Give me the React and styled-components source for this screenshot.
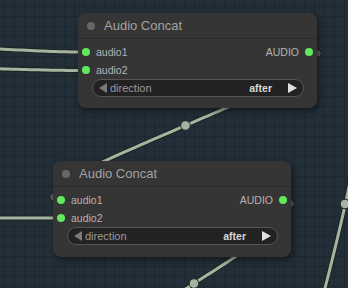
import React from "react"
import styled, { createGlobalStyle } from "styled-components"

const GlobalStyle = createGlobalStyle`
  html, body {
    margin: 0;
    padding: 0;
    background: #222e38;
  }
`

const Canvas = styled.div`
  position: relative;
  width: 348px;
  height: 288px;
  overflow: hidden;
  font-family: "Liberation Sans", Arial, sans-serif;
  background-color: #222e38;
  background-image:
    linear-gradient(to right, rgba(0, 0, 0, 0.13) 1px, transparent 1px),
    linear-gradient(to bottom, rgba(0, 0, 0, 0.13) 1px, transparent 1px);
  background-size: 10px 10px;
  background-position: 4px 6px;
`

const LinkLayer = styled.svg`
  position: absolute;
  left: 0;
  top: 0;
`

const NodeBox = styled.div`
  position: absolute;
  left: ${p => p.$x}px;
  top: ${p => p.$y}px;
  width: ${p => p.$w}px;
  height: ${p => p.$h}px;
  box-sizing: border-box;
  display: flex;
  flex-direction: column;
  background: #353535;
  border-radius: 8px;
  box-shadow: 2px 3px 6px rgba(0, 0, 0, 0.45);
`

const TitleBar = styled.div`
  height: 25px;
  display: flex;
  align-items: center;
  gap: 9px;
  padding-left: 9px;
  border-bottom: 1px solid #2a2a2a;
`

const TitleDot = styled.span`
  width: 8px;
  height: 8px;
  border-radius: 50%;
  background: #676767;
`

const TitleText = styled.span`
  font-size: 13px;
  color: #a3a3a3;
`

const Body = styled.div`
  display: flex;
  flex-direction: column;
  padding: 4px 0 0;
`

const SlotRow = styled.div`
  height: 18px;
  display: flex;
  align-items: center;
  justify-content: space-between;
`

const Slot = styled.div`
  display: flex;
  align-items: center;
  gap: 6px;
  flex-direction: ${p => (p.$out ? "row-reverse" : "row")};
  padding: ${p => (p.$out ? "0 4px 0 0" : "0 0 0 4px")};
`

const SlotDot = styled.span`
  width: 8px;
  height: 8px;
  border-radius: 50%;
  background: #61e85c;
`

const SlotLabel = styled.span`
  font-size: 10.5px;
  color: #b4b4b4;
`

const Combo = styled.div`
  margin: 0 13px 0 14px;
  height: 18px;
  box-sizing: border-box;
  display: flex;
  align-items: center;
  padding: 0 6px 0 6px;
  border-radius: 9px;
  background: #222222;
  border: 1px solid #555555;
`

const Arrow = styled.span`
  width: 0;
  height: 0;
  border-top: 5px solid transparent;
  border-bottom: 5px solid transparent;
  ${p => (p.$right ? "border-left: 9px solid #e0e0e0;" : "border-right: 8px solid #7a7a7a;")}
`

const ComboLabel = styled.span`
  flex: 1;
  margin-left: 3px;
  font-size: 11px;
  color: #9a9a9a;
`

const ComboValue = styled.span`
  font-size: 10.5px;
  font-weight: 700;
  color: #d8d8d8;
  margin-right: 16px;
`

const WIRE = "#a3b5a0"

function bez(p, t) {
  const u = 1 - t
  const a = u * u * u, b = 3 * u * u * t, c = 3 * u * t * t, d = t * t * t
  return [
    a * p[0][0] + b * p[1][0] + c * p[2][0] + d * p[3][0],
    a * p[0][1] + b * p[1][1] + c * p[2][1] + d * p[3][1],
  ]
}

function segment(p, t0, t1) {
  const pts = []
  for (let i = 0; i <= 40; i++) {
    const [x, y] = bez(p, t0 + ((t1 - t0) * i) / 40)
    pts.push(`${x.toFixed(2)} ${y.toFixed(2)}`)
  }
  return "M " + pts.join(" L ")
}

const links = [
  { p: [[-80, 46], [-40, 46], [38, 52], [80, 52]], t: [0, 1] },
  { p: [[-80, 67], [-40, 67], [38, 70.5], [80, 70.5]], t: [0, 1] },
  { p: [[-10, 218], [10, 218], [40, 218], [56, 218]], t: [0, 1] },
  { p: [[318, 52], [394, 52], [-23, 199], [53, 199]], t: [0.28, 0.72], dot: true },
  { p: [[291, 201], [355, 201], [33, 366], [97, 366]], t: [0.3, 0.7], dot: true },
  { p: [[356, 150], [350, 185], [342, 222], [322, 300]], t: [0, 1], dot: [345, 204] },
]

function Links() {
  return (
    <LinkLayer width="348" height="288">
      {links.map((l, i) => (
        <g key={i}>
          <path d={segment(l.p, l.t[0], l.t[1])} stroke="#1c2420" strokeWidth="5" fill="none" />
          <path d={segment(l.p, l.t[0], l.t[1])} stroke={WIRE} strokeWidth="3" fill="none" />
        </g>
      ))}
      {links.filter(l => l.dot).map((l, i) => {
        const [x, y] = Array.isArray(l.dot) ? l.dot : bez(l.p, 0.5)
        return <circle key={i} cx={x} cy={y} r="4.8" fill={WIRE} stroke="#1c2420" strokeWidth="1" />
      })}
      <circle cx="317.5" cy="53.5" r="3.8" fill="#5c5c5c" stroke="#1f1f1f" strokeWidth="1" />
      <circle cx="290.5" cy="203.5" r="3.8" fill="#5c5c5c" stroke="#1f1f1f" strokeWidth="1" />
      <circle cx="53.5" cy="197" r="3.8" fill="#5c5c5c" stroke="#1f1f1f" strokeWidth="1" />
    </LinkLayer>
  )
}

function AudioConcat({ x, y, w, h }) {
  return (
    <NodeBox $x={x} $y={y} $w={w} $h={h}>
      <TitleBar>
        <TitleDot />
        <TitleText>Audio Concat</TitleText>
      </TitleBar>
      <Body>
        <SlotRow>
          <Slot>
            <SlotDot />
            <SlotLabel>audio1</SlotLabel>
          </Slot>
          <Slot $out>
            <SlotDot />
            <SlotLabel>AUDIO</SlotLabel>
          </Slot>
        </SlotRow>
        <SlotRow>
          <Slot>
            <SlotDot />
            <SlotLabel>audio2</SlotLabel>
          </Slot>
        </SlotRow>
        <Combo>
          <Arrow />
          <ComboLabel>direction</ComboLabel>
          <ComboValue>after</ComboValue>
          <Arrow $right />
        </Combo>
      </Body>
    </NodeBox>
  )
}

export default function App() {
  return (
    <Canvas>
      <GlobalStyle />
      <Links />
      <AudioConcat x={78} y={13} w={239} h={95} />
      <AudioConcat x={53} y={161} w={238} h={96} />
    </Canvas>
  )
}
